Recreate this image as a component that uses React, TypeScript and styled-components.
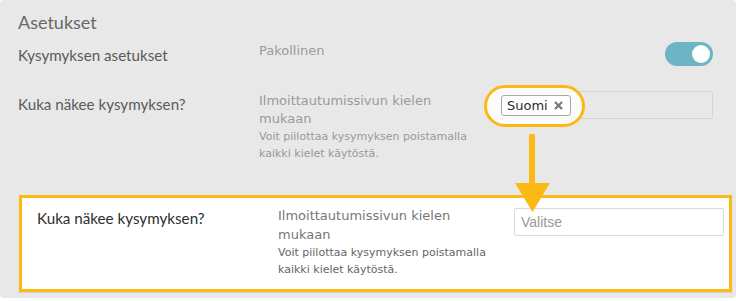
import React from "react";
import styled, { createGlobalStyle } from "styled-components";

const Global = createGlobalStyle`
  html, body { margin: 0; padding: 0; background: #ffffff; }
  * { box-sizing: border-box; }
`;

const YELLOW = "#fdb913";

const Panel = styled.div`
  position: relative;
  width: 736px;
  height: 298px;
  background: #e8e8e8;
  border-radius: 4px;
  padding: 10px 4px 0 18px;
  font-family: "Lato", "Open Sans", sans-serif;
`;

const Title = styled.h2`
  margin: 0;
  font-size: 18px;
  line-height: 24px;
  font-weight: 400;
  color: #686868;
`;

const Row = styled.div<{ $top: number }>`
  display: grid;
  grid-template-columns: 241px 236px 1fr;
  align-items: start;
  margin-top: ${(p) => p.$top}px;
  padding-right: 19px;
`;

const Label = styled.div<{ $dark?: boolean; $offset: number }>`
  font-size: 15.2px;
  line-height: 20px;
  color: ${(p) => (p.$dark ? "#2e2e2e" : "#5a5a5a")};
  margin-top: ${(p) => p.$offset}px;
`;

const Middle = styled.div<{ $offset: number }>`
  margin-top: ${(p) => p.$offset}px;
  max-width: 220px;
  font-family: "DejaVu Sans", Verdana, sans-serif;
`;

const MainText = styled.div<{ $dark?: boolean; $lh: number }>`
  font-size: 13px;
  line-height: ${(p) => p.$lh}px;
  color: ${(p) => (p.$dark ? "#777777" : "#9a9a9a")};
`;

const HelpText = styled.div<{ $dark?: boolean }>`
  font-size: 11px;
  line-height: 17px;
  color: ${(p) => (p.$dark ? "#666666" : "#999999")};
`;

const ToggleCell = styled.div`
  display: flex;
  justify-content: flex-end;
`;

const Toggle = styled.div`
  width: 48px;
  height: 24px;
  border-radius: 12px;
  background: #6db5c5;
  display: flex;
  align-items: center;
  justify-content: flex-end;
  padding-right: 3px;
`;

const Knob = styled.span`
  width: 18px;
  height: 18px;
  border-radius: 50%;
  background: #ffffff;
`;

const TagInput = styled.div`
  position: relative;
  height: 28px;
  border: 1px solid #d6d6d6;
  border-radius: 2px;
  display: flex;
  align-items: center;
  padding-left: 5px;
`;

const TagWrap = styled.div`
  position: relative;
  display: flex;
`;

const Ellipse = styled.div`
  position: absolute;
  left: -17px;
  right: -14px;
  top: -10px;
  bottom: -11px;
  border: 3px solid ${YELLOW};
  border-radius: 22px;
  background: rgba(255, 255, 255, 0.85);
`;

const Tag = styled.span`
  position: relative;
  display: inline-flex;
  align-items: center;
  gap: 6px;
  height: 21px;
  padding: 0 7px 0 5px;
  border: 1px solid #a9a9a9;
  border-radius: 3px;
  background: #ffffff;
  font-family: "DejaVu Sans", Verdana, sans-serif;
  font-size: 13px;
  color: #2a2a2a;
`;

const Highlight = styled.div`
  margin: 33px 0 0 1px;
  border: 3px solid ${YELLOW};
  background: #ffffff;
  padding: 10px 5px 11px 15px;
  box-shadow: 0 1px 1px rgba(0, 0, 0, 0.08);
`;

const BoxRow = styled.div`
  display: grid;
  grid-template-columns: 241px 236px 1fr;
  align-items: start;
`;

const SelectBox = styled.div`
  height: 28px;
  border: 1px solid #d9d9d9;
  border-radius: 2px;
  background: #ffffff;
  display: flex;
  align-items: center;
  padding-left: 6px;
  font-family: "Liberation Sans", Arial, sans-serif;
  font-size: 14px;
  color: #999999;
`;

const Arrow = styled.svg`
  position: absolute;
  left: 514px;
  top: 134px;
  z-index: 2;
`;

function CloseIcon() {
  return (
    <svg width="9" height="9" viewBox="0 0 9 9">
      <path d="M1 1 L8 8 M8 1 L1 8" stroke="#767676" strokeWidth="2.2" strokeLinecap="butt" />
    </svg>
  );
}

export default function App() {
  return (
    <>
      <Global />
      <Panel>
        <Title>Asetukset</Title>
        <Row $top={8}>
          <Label $offset={3}>Kysymyksen asetukset</Label>
          <Middle $offset={0}>
            <MainText $lh={18}>Pakollinen</MainText>
          </Middle>
          <ToggleCell>
            <Toggle>
              <Knob />
            </Toggle>
          </ToggleCell>
        </Row>
        <Row $top={25}>
          <Label $offset={3}>Kuka näkee kysymyksen?</Label>
          <Middle $offset={1}>
            <MainText $lh={18}>Ilmoittautumissivun kielen mukaan</MainText>
            <HelpText>Voit piilottaa kysymyksen poistamalla kaikki kielet käytöstä.</HelpText>
          </Middle>
          <TagInput>
            <TagWrap>
              <Ellipse />
              <Tag>
                Suomi
                <CloseIcon />
              </Tag>
            </TagWrap>
          </TagInput>
        </Row>
        <Highlight>
          <BoxRow>
            <Label $dark $offset={0}>Kuka näkee kysymyksen?</Label>
            <Middle $offset={-2}>
              <MainText $dark $lh={19}>Ilmoittautumissivun kielen mukaan</MainText>
              <HelpText $dark>Voit piilottaa kysymyksen poistamalla kaikki kielet käytöstä.</HelpText>
            </Middle>
            <SelectBox>Valitse</SelectBox>
          </BoxRow>
        </Highlight>
        <Arrow width="37" height="79" viewBox="0 0 37 79">
          <rect x="15" y="0" width="6" height="52" rx="1.5" fill={YELLOW} />
          <polygon points="1,49 36,49 18.5,78" fill={YELLOW} />
        </Arrow>
      </Panel>
    </>
  );
}
